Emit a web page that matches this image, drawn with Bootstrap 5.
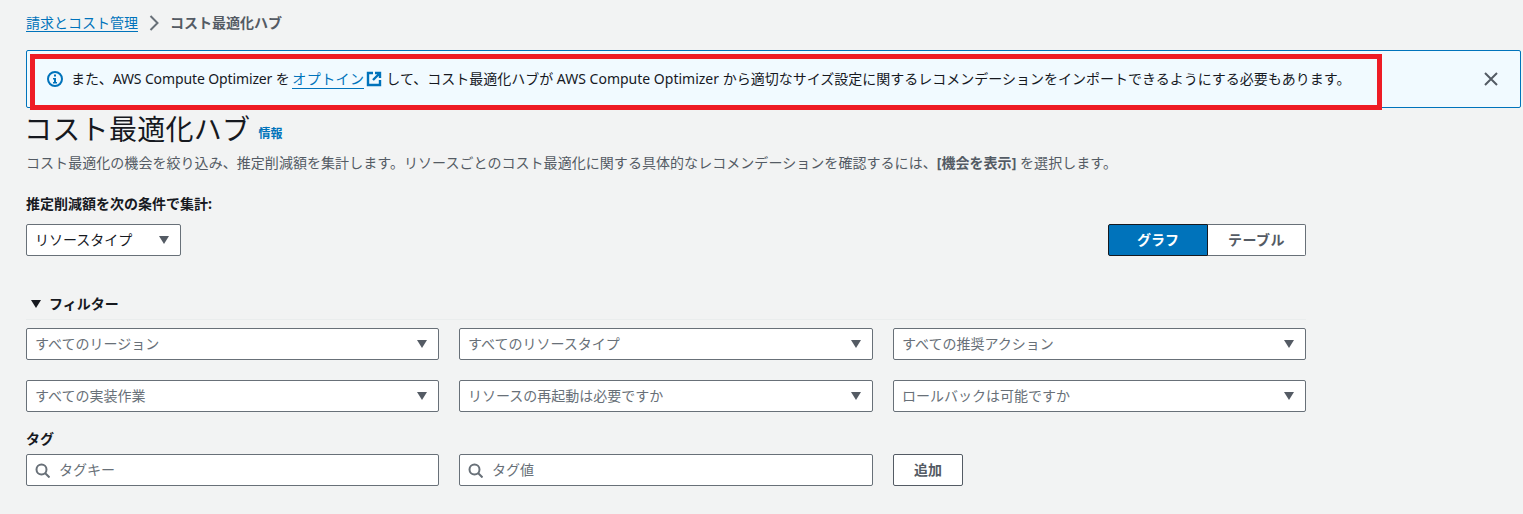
<!DOCTYPE html>
<html lang="ja">
<head>
<meta charset="utf-8">
<title>コスト最適化ハブ</title>
<link href="https://cdn.jsdelivr.net/npm/bootstrap@5.3.0/dist/css/bootstrap.min.css" rel="stylesheet">
<style>
html,body{height:514px;overflow:hidden}
body{background:#f2f3f3;color:#16191f;font-family:"Noto Sans","Noto Sans CJK JP",sans-serif;font-size:14px;line-height:20px}
.pg{padding:0 2px 0 26px}
.crumbs{height:46px;margin-bottom:4px;gap:10px;color:#545b64}
.crumbs a{color:#0073bb;text-decoration:none;border-bottom:1px solid #0073bb;line-height:17px}
.crumbs b{font-weight:700;color:#545b64}
.banner{height:58px;background:#f1faff;border:1px solid #0073bb;border-radius:2px;padding:0 21px 0 20px;position:relative}
.banner a{color:#0073bb;text-decoration:none;border-bottom:1px solid #0073bb;margin-left:-1px;letter-spacing:.4px}
.lat{letter-spacing:-.12px}
.extic{margin:0 4px 0 2px}
.redbox{position:absolute;left:3px;top:3px;width:1352px;height:56px;border:5px solid #ee1c25;pointer-events:none}
.title{height:39px;margin:0;padding-top:2px}
.title h1{font-size:28px;line-height:36px;font-weight:400;margin:0 0 0 -2px;letter-spacing:.3px}
.title a{font-size:12px;font-weight:700;color:#0073bb;text-decoration:none;margin-left:8px;position:relative;top:5px}
.subt{color:#545b64;height:20px;margin:6px 0 21px;letter-spacing:.05px}
.subt b{font-weight:700}
.wrap{width:1280px}
.lbl{font-weight:700;font-size:14px;margin:0;height:20px;line-height:20px}
.fbox{height:32px;background:#fff;border:1px solid #687078;border-radius:2px;padding:0 10px 0 8px;color:#687078;width:100%}
.fbox.sel{color:#16191f;width:155px;margin:10px 0 0}
.fbox span{white-space:nowrap}
.seg{width:198px;height:32px;margin-top:10px}
.seg div{height:32px;font-weight:700;display:flex;align-items:center;justify-content:center}
.seg .on{width:100px;background:#0073bb;color:#fff;border:1px solid #16191f;border-radius:2px 0 0 2px}
.seg .off{width:98px;background:#fff;color:#545b64;border:1px solid #687078;border-left:0;border-radius:0 2px 2px 0;letter-spacing:.5px}
.fhead{margin-top:38px;height:26px;font-weight:700;border-bottom:1px solid #eaeded;gap:7px;padding:0 0 6px 4px}
.grid3{display:grid;grid-template-columns:413px 414px 413px;column-gap:20px}
.grid3.r1{margin-top:8px}
.grid3.r2{margin-top:20px}
.taglbl{margin-top:16px;height:26px;font-weight:700;padding-bottom:4px}
.srch{gap:9px;padding-left:8px}
.addbtn{width:70px;height:32px;background:#fff;border:1px solid #545b64;border-radius:2px;font-weight:700;color:#545b64;font-size:14px;line-height:20px;padding:0}
</style>
</head>
<body>
<div class="pg">
  <nav class="crumbs d-flex align-items-center">
    <a href="#">請求とコスト管理</a>
    <svg width="12" height="16" viewBox="0 0 12 16"><path d="M2.5 1l7 7-7 7" fill="none" stroke="#687078" stroke-width="2"/></svg>
    <b>コスト最適化ハブ</b>
  </nav>
  <div class="banner d-flex align-items-center justify-content-between">
    <div class="d-flex align-items-center">
      <svg width="16" height="16" viewBox="0 0 16 16" class="me-2"><circle cx="8" cy="8" r="7" fill="none" stroke="#0073bb" stroke-width="2"/><path d="M6 7h3v4h1v1.5H6V11h1V8.500H6z" fill="#0073bb"/><rect x="7" y="3.500" width="2" height="2" fill="#0073bb"/></svg>
      <span><span class="lat">また、AWS Compute Optimizer を</span> <a href="#">オプトイン</a></span>
      <svg width="16" height="16" viewBox="0 0 16 16" class="extic"><path d="M7 2H2v12h12V9" fill="none" stroke="#0073bb" stroke-width="2.4"/><path d="M9 2h5v5M14 2L7 9" fill="none" stroke="#0073bb" stroke-width="2.4"/></svg>
      <span>して、コスト最適化ハブが AWS Compute Optimizer から適切なサイズ設定に関するレコメンデーションをインポートできるようにする必要もあります。</span>
    </div>
    <svg width="16" height="16" viewBox="0 0 16 16"><path d="M2 2l12 12M14 2L2 14" fill="none" stroke="#545b64" stroke-width="2"/></svg>
    <div class="redbox"></div>
  </div>
  <div class="title d-flex align-items-center">
    <h1>コスト最適化ハブ</h1><a href="#">情報</a>
  </div>
  <p class="subt">コスト最適化の機会を絞り込み、推定削減額を集計します。リソースごとのコスト最適化に関する具体的なレコメンデーションを確認するには、<b>[機会を表示]</b> を選択します。</p>
  <div class="wrap">
    <p class="lbl">推定削減額を次の条件で集計:</p>
    <div class="d-flex justify-content-between align-items-start">
      <div class="fbox sel d-flex align-items-center justify-content-between"><span>リソースタイプ</span><svg width="12" height="8" viewBox="0 0 12 8"><path d="M1 0h10L6 8z" fill="#545b64"/></svg></div>
      <div class="seg d-flex">
        <div class="on">グラフ</div><div class="off">テーブル</div>
      </div>
    </div>
    <div class="fhead d-flex align-items-center">
      <svg width="12" height="8" viewBox="0 0 12 8"><path d="M1 0h10L6 8z" fill="#16191f"/></svg><span>フィルター</span>
    </div>
    <div class="grid3 r1">
      <div class="fbox d-flex align-items-center justify-content-between"><span>すべてのリージョン</span><svg width="12" height="8" viewBox="0 0 12 8"><path d="M1 0h10L6 8z" fill="#545b64"/></svg></div>
      <div class="fbox d-flex align-items-center justify-content-between"><span>すべてのリソースタイプ</span><svg width="12" height="8" viewBox="0 0 12 8"><path d="M1 0h10L6 8z" fill="#545b64"/></svg></div>
      <div class="fbox d-flex align-items-center justify-content-between"><span>すべての推奨アクション</span><svg width="12" height="8" viewBox="0 0 12 8"><path d="M1 0h10L6 8z" fill="#545b64"/></svg></div>
    </div>
    <div class="grid3 r2">
      <div class="fbox d-flex align-items-center justify-content-between"><span>すべての実装作業</span><svg width="12" height="8" viewBox="0 0 12 8"><path d="M1 0h10L6 8z" fill="#545b64"/></svg></div>
      <div class="fbox d-flex align-items-center justify-content-between"><span>リソースの再起動は必要ですか</span><svg width="12" height="8" viewBox="0 0 12 8"><path d="M1 0h10L6 8z" fill="#545b64"/></svg></div>
      <div class="fbox d-flex align-items-center justify-content-between"><span>ロールバックは可能ですか</span><svg width="12" height="8" viewBox="0 0 12 8"><path d="M1 0h10L6 8z" fill="#545b64"/></svg></div>
    </div>
    <div class="taglbl d-flex align-items-center">タグ</div>
    <div class="grid3">
      <div class="fbox srch d-flex align-items-center"><svg width="15" height="15" viewBox="0 0 15 15"><circle cx="6.500" cy="6.500" r="5" fill="none" stroke="#687078" stroke-width="2"/><path d="M10 10l4.500 4.500" stroke="#687078" stroke-width="2"/></svg><span>タグキー</span></div>
      <div class="fbox srch d-flex align-items-center"><svg width="15" height="15" viewBox="0 0 15 15"><circle cx="6.500" cy="6.500" r="5" fill="none" stroke="#687078" stroke-width="2"/><path d="M10 10l4.500 4.500" stroke="#687078" stroke-width="2"/></svg><span>タグ値</span></div>
      <div><button type="button" class="addbtn d-block">追加</button></div>
    </div>
  </div>
</div>
<script src="https://cdn.jsdelivr.net/npm/bootstrap@5.3.0/dist/js/bootstrap.bundle.min.js"></script>
</body>
</html>
